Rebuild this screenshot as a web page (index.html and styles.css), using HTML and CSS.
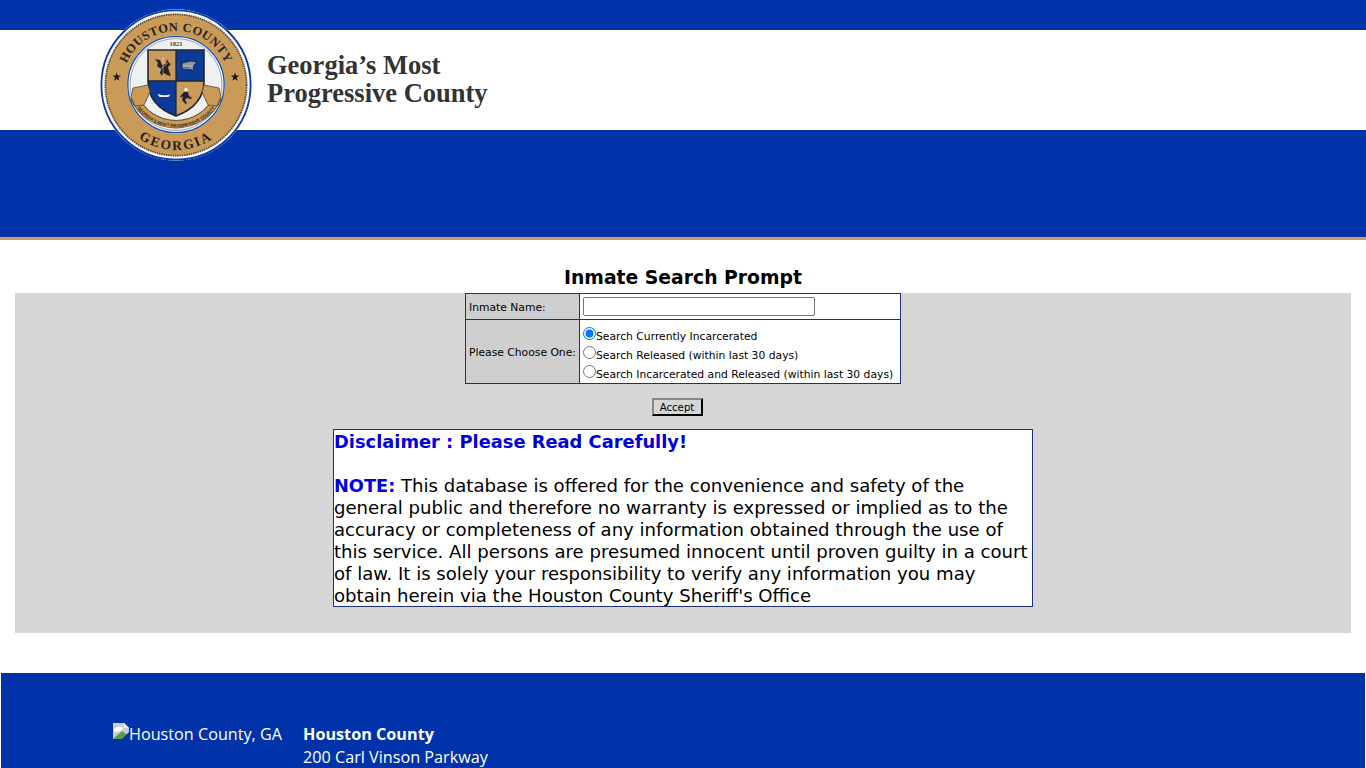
FILE: index.html
```html
<!DOCTYPE html>
<html lang="en">
<head>
<meta charset="utf-8">
<title>Inmate Search Prompt</title>
<link rel="stylesheet" href="styles.css">
</head>
<body>
<header class="site-header">
  <div class="top-bar"></div>
  <div class="brand-band">
    <p class="tagline">Georgia’s Most<br>Progressive County</p>
  </div>
  <div class="nav-band"></div>
  <svg class="seal" viewBox="0 0 152 152" width="152" height="152" role="img" aria-label="Houston County seal">
    <defs>
      <path id="arcTop" d="M22 76a54 54 0 0 1 108 0"/>
      <path id="arcBottom" d="M11 76a65 65 0 0 0 130 0"/>
      <path id="arcBanner" d="M31 87A48 48 0 0 0 121 87"/>
      <path id="star" d="M0-4.4l1.1 3h3.2l-2.6 2 1 3.2L0 1.9l-2.7 1.9 1-3.2-2.6-2h3.2z"/>
      <path id="shieldShape" d="M48 41H104V72C104 90 92 101 76 107C60 101 48 90 48 72Z"/>
      <clipPath id="shieldClip"><use href="#shieldShape"/></clipPath>
    </defs>
    <circle cx="76" cy="76" r="75.8" fill="#fff"/>
    <circle cx="76" cy="76" r="74.6" fill="none" stroke="#0b3aa6" stroke-width="1.8"/>
    <circle cx="76" cy="76" r="72.6" fill="#eef0f4"/>
    <circle cx="76" cy="76" r="71" fill="#c99a58"/>
    <circle cx="76" cy="76" r="70.6" fill="none" stroke="#4a4436" stroke-width="1.7" stroke-dasharray="1.3 1"/>
    <circle cx="76" cy="75.5" r="49" fill="#eef0f2"/>
    <circle cx="76" cy="75.5" r="48.2" fill="none" stroke="#1b4ba6" stroke-width="1.3"/>
    <circle cx="76" cy="75.5" r="46" fill="none" stroke="#7f8a9c" stroke-width=".7"/>
    <text class="seal-text"><textPath href="#arcTop" startOffset="50%" text-anchor="middle">HOUSTON COUNTY</textPath></text>
    <text class="seal-text seal-state"><textPath href="#arcBottom" startOffset="50%" text-anchor="middle">GEORGIA</textPath></text>
    <use href="#star" x="16.7" y="68" class="seal-star"/>
    <use href="#star" x="135" y="68" class="seal-star"/>
    <text class="seal-year" x="76" y="37" text-anchor="middle">1821</text>
    <g clip-path="url(#shieldClip)">
      <path d="M48 41h28v31H48z" fill="#c99a58"/>
      <path d="M76 41h28v31H76z" fill="#0b3a98"/>
      <path d="M48 72h28v36H48z" fill="#0b3a98"/>
      <path d="M76 72h28v36H76z" fill="#c99a58"/>
    </g>
    <use href="#shieldShape" fill="none" stroke="#1d2633" stroke-width="1.6"/>
    <path d="M76 41v66M48 72h56" stroke="#1d2633" stroke-width="1.3"/>
    <path d="M55 50l5 1 2 5 4-1 1-5 2 4 2 1-3 3 1 4 2 5-4-1-3-2-2 3-2-3 1-4-4-3 1-3z" fill="#25241f"/>
    <path d="M63 48v20M58 62l10-8" stroke="#e8e2d0" stroke-width=".5"/>
    <path d="M82 54l9-2 6 1-3 3-1 6-4-3-7 0z" fill="#8e98a6" stroke="#10131a" stroke-width=".7"/>
    <path d="M83 57h9M83 59.500h8" stroke="#e3e6ea" stroke-width=".5"/>
    <path d="M58 85c4 1.500 8 1.500 12 0.500 0 1-1 2.500-2.500 2.500h-7c-1.500 0-2.500-1.500-2.500-3z" fill="#eef0f3"/>
    <circle cx="86" cy="80.500" r="1.700" fill="#f0f0ea"/>
    <path d="M84 83h4l1 4 3 2-1 1-4-1-2 2 2 3-1.500 1-3.500-4 1-4-2 1.500-1-1z" fill="#20242a"/>
    <path d="M34 88A46 46 0 0 0 118 88" fill="none" stroke="#5a4526" stroke-width="8.400"/>
    <path d="M34 88A46 46 0 0 0 118 88" fill="none" stroke="#c99a58" stroke-width="6.800"/>
    <path d="M33 79l15-3 2 7-6 13-9 1-4-9z" fill="#c99a58" stroke="#5a4526" stroke-width=".8"/>
    <path d="M119 79l-15-3-2 7 6 13 9 1 4-9z" fill="#c99a58" stroke="#5a4526" stroke-width=".8"/>
    <text class="seal-banner"><textPath href="#arcBanner" startOffset="50%" text-anchor="middle">GEORGIA'S MOST PROGRESSIVE COUNTY</textPath></text>
  </svg>
</header>

<main class="content">
  <h1 class="page-title">Inmate Search Prompt</h1>
  <div class="panel">
    <form class="search-form" onsubmit="return false">
      <table class="prompt-table">
        <tr class="name-row">
          <th>Inmate Name:</th>
          <td><input class="name-input" type="text"></td>
        </tr>
        <tr>
          <th>Please Choose One:</th>
          <td class="choices">
            <label class="choice"><input type="radio" name="scope" checked>Search Currently Incarcerated</label>
            <label class="choice"><input type="radio" name="scope">Search Released (within last 30 days)</label>
            <label class="choice"><input type="radio" name="scope">Search Incarcerated and Released (within last 30 days)</label>
          </td>
        </tr>
      </table>
      <button class="accept" type="button">Accept</button>
    </form>
    <section class="disclaimer">
      <h2 class="disclaimer-title">Disclaimer : Please Read Carefully!</h2>
      <p class="disclaimer-body"><strong>NOTE:</strong> This database is offered for the convenience and safety of the general public and therefore no warranty is expressed or implied as to the accuracy or completeness of any information obtained through the use of this service. All persons are presumed innocent until proven guilty in a court of law. It is solely your responsibility to verify any information you may obtain herein via the Houston County Sheriff's Office</p>
    </section>
  </div>
</main>

<footer class="site-footer">
  <div class="footer-logo">
    <svg class="broken-image" viewBox="0 0 16 16" width="16" height="16" aria-hidden="true">
      <path d="M0 0h11l5 5v11H0z" fill="#c8cdd6"/>
      <path d="M11 0l5 5h-5z" fill="#fff"/>
      <path d="M1 6c3-3 6-3 9-1l-2 3-7 1z" fill="#fff"/>
      <path d="M0 16L9 8l7 5v3z" fill="#5f9c45"/>
      <path d="M9 16l7-7v7z" fill="#0033aa"/>
    </svg><span>Houston County, GA</span>
  </div>
  <address class="footer-address">
    <strong>Houston County</strong>
    <span>200 Carl Vinson Parkway</span>
  </address>
</footer>
</body>
</html>
```
FILE: styles.css
```css
* { box-sizing: border-box; }
html, body { margin: 0; padding: 0; }
body {
  background: #fff;
  color: #000;
  font-family: "DejaVu Sans", Verdana, sans-serif;
  height: 768px;
  overflow: hidden;
}
.site-header { position: relative; }
.top-bar { height: 30px; background: #0033aa; }
.brand-band { height: 100px; background: #fff; padding: 0 0 2px 267px; display: flex; align-items: center; }
.tagline {
  margin: 0;
  font-family: "Liberation Serif", serif;
  font-weight: 700;
  font-size: 26.5px;
  line-height: 28px;
  color: #333;
}
.nav-band { height: 110px; background: #0033aa; border-bottom: 3px solid #cf9a6c; }
.seal { position: absolute; left: 100px; top: 9px; }
.seal-text { font: 700 12.4px "Liberation Serif", serif; fill: #26221c; letter-spacing: .5px; }
.seal-state { font-size: 13.5px; letter-spacing: 2px; }
.seal-star { fill: #1c1c1c; }
.seal-year { font: 700 6.5px "Liberation Serif", serif; fill: #444; }
.seal-banner { font: 700 4.3px "Liberation Sans", sans-serif; fill: #2a241c; }

.content { padding: 25px 15px 0; }
.page-title {
  margin: 0 0 2px;
  text-align: center;
  font-size: 18.8px;
  line-height: 26px;
  font-weight: 700;
}
.panel {
  background: #d6d6d6;
  height: 340px;
  display: flex;
  flex-direction: column;
  align-items: center;
}
.search-form { display: flex; flex-direction: column; align-items: center; }
.prompt-table {
  width: 436px;
  border-collapse: collapse;
  font-size: 10.75px;
}
.prompt-table th, .prompt-table td { border: 1px solid #1f2f7f; padding: 0 3px; }
.prompt-table th { background: #cfcfcf; text-align: left; font-weight: 400; width: 114px; padding-top: 2px; white-space: nowrap; }
.prompt-table td { background: #fff; }
.name-row { height: 26px; }
.name-input {
  display: block;
  width: 232px;
  height: 19px;
  border: 1px solid #767676;
  border-radius: 2px;
  background: #fff;
  padding: 1px 2px;
}
.prompt-table .choices { height: 64px; padding-top: 7px; vertical-align: top; }
.choice { display: block; height: 19px; line-height: 19px; white-space: nowrap; }
.choice:last-child { height: 18px; }
.choice input { margin: 0; width: 13px; height: 13px; }
.accept {
  margin: 14px 12px 0 0;
  width: 51px;
  height: 18px;
  padding: 0;
  background: #d6d6d6;
  border: 2px outset #333;
  font: 10.2px "DejaVu Sans", Verdana, sans-serif;
  color: #000;
}
.disclaimer {
  margin-top: 13px;
  width: 700px;
  height: 178px;
  background: #fff;
  border: 1px solid #1f2f7f;
  padding: 1px 0 0;
  font-size: 18.1px;
  line-height: 22px;
}
.disclaimer-title { margin: 0 0 22px; font-size: 17.85px; line-height: 22px; font-weight: 700; color: #0000dd; }
.disclaimer-body { margin: 0; }
.disclaimer-body strong { color: #0000dd; font-size: 17.75px; }

.site-footer {
  margin: 40px 1px 0;
  height: 95px;
  background: #0033aa;
  color: #fff;
  font-family: "Open Sans", sans-serif;
  font-size: 16.2px;
  padding: 49px 0 0 112px;
  display: flex;
  gap: 21px;
}
.footer-logo { display: flex; align-items: flex-start; height: 24px; line-height: 24px; }
.broken-image { flex: none; margin-top: 1px; }
.footer-address { font-style: normal; display: flex; flex-direction: column; line-height: 23px; padding-top: 1px; }
.footer-address strong { font-weight: 700; }
```
